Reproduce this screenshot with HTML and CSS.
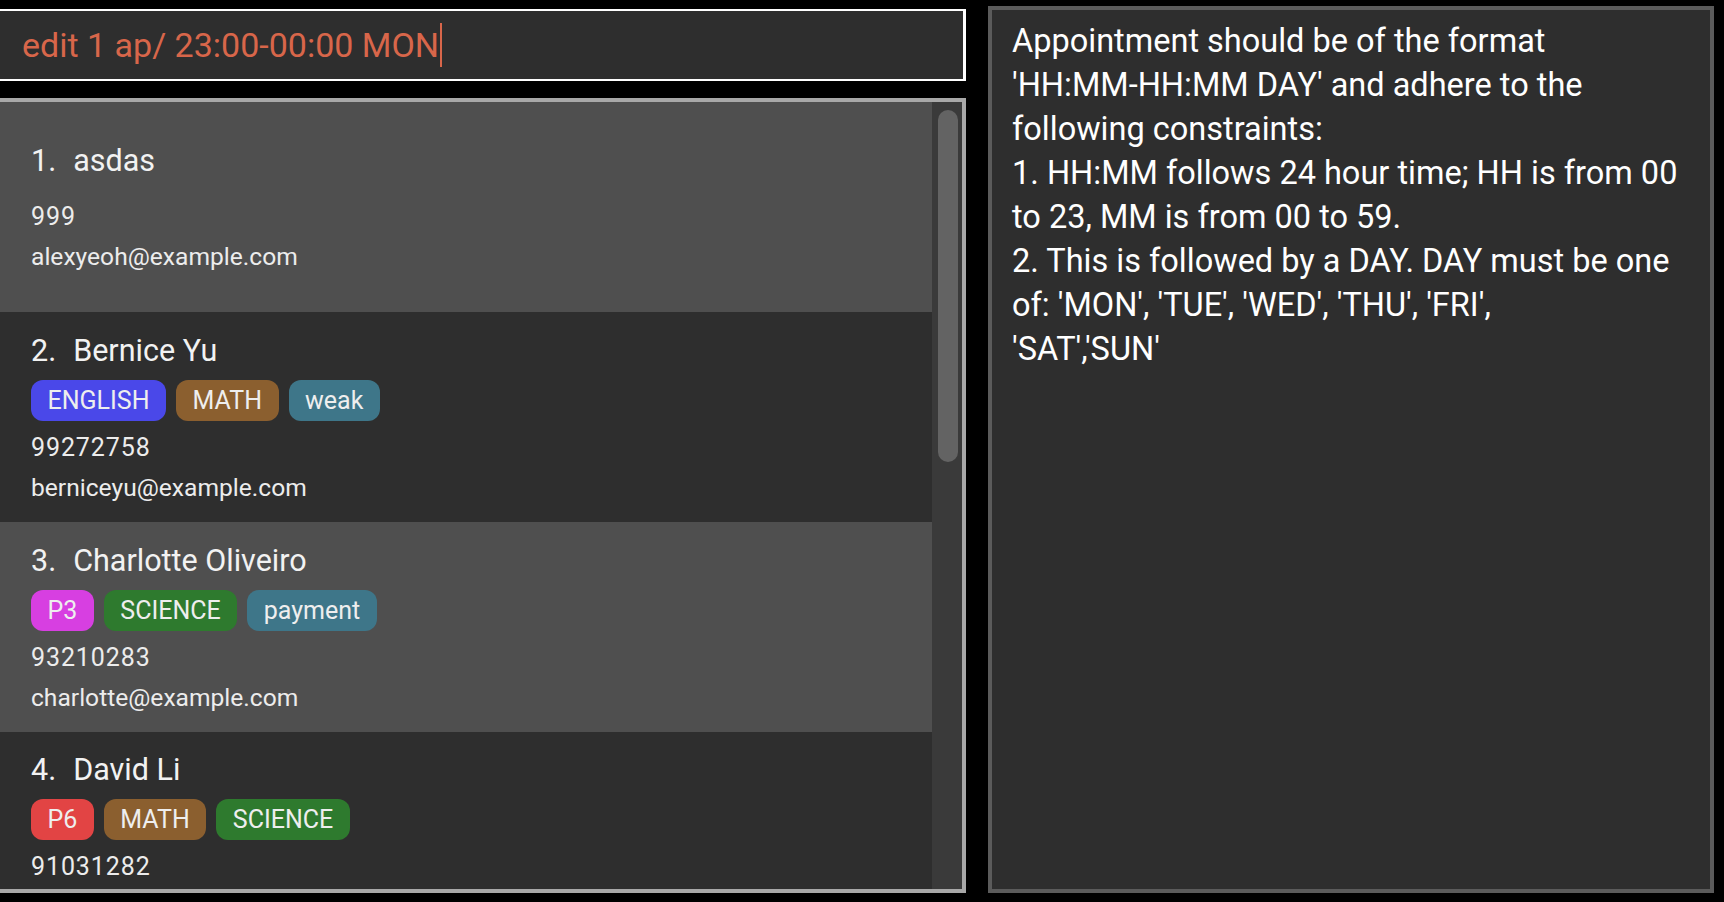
FILE: index.html
```html
<!DOCTYPE html>
<html lang="en">
<head>
<meta charset="utf-8">
<title>Address Book</title>
<link rel="stylesheet" href="styles.css">
</head>
<body>
<div class="app">
  <div class="left">
    <div class="command">
      <span class="command-text">edit 1 ap/ 23:00-00:00 MON</span><span class="caret"></span>
    </div>
    <div class="list">
      <div class="cards">
        <div class="card alt">
          <div class="name"><span class="idx">1.</span>asdas</div>
          <div class="tags"></div>
          <div class="detail phone">999</div>
          <div class="detail email">alexyeoh@example.com</div>
        </div>
        <div class="card">
          <div class="name"><span class="idx">2.</span>Bernice Yu</div>
          <div class="tags">
            <span class="tag blue">ENGLISH</span>
            <span class="tag brown">MATH</span>
            <span class="tag teal">weak</span>
          </div>
          <div class="detail phone">99272758</div>
          <div class="detail email">berniceyu@example.com</div>
        </div>
        <div class="card alt">
          <div class="name"><span class="idx">3.</span>Charlotte Oliveiro</div>
          <div class="tags">
            <span class="tag magenta">P3</span>
            <span class="tag green">SCIENCE</span>
            <span class="tag teal">payment</span>
          </div>
          <div class="detail phone">93210283</div>
          <div class="detail email">charlotte@example.com</div>
        </div>
        <div class="card last">
          <div class="name"><span class="idx">4.</span>David Li</div>
          <div class="tags">
            <span class="tag red">P6</span>
            <span class="tag brown">MATH</span>
            <span class="tag green">SCIENCE</span>
          </div>
          <div class="detail phone">91031282</div>
        </div>
      </div>
      <div class="scrollbar"><div class="thumb"></div></div>
    </div>
  </div>
  <div class="result">
    <p>Appointment should be of the format <span class="nowrap">'HH:MM-HH:MM</span> DAY' and adhere to the following constraints:<br>1. HH:MM follows 24 hour time; HH is from 00 to 23, MM is from 00 to 59.<br>2. This is followed by a DAY. DAY must be one of: 'MON', 'TUE', 'WED', 'THU', 'FRI',<br>'SAT','SUN'</p>
  </div>
</div>
</body>
</html>
```

FILE: styles.css
```css
* { box-sizing: border-box; }

html, body {
  margin: 0;
  height: 100%;
  background: #000;
  overflow: hidden;
}

body {
  font-family: Roboto, "Liberation Sans", Arial, sans-serif;
  color: #fff;
}

.app {
  display: flex;
  gap: 22px;
  height: 902px;
  padding: 6px 10px 9px 0;
}

.left {
  width: 970px;
  margin-left: -4px;
  padding-top: 3px;
  display: flex;
  flex-direction: column;
  gap: 17px;
  flex: none;
}

.command {
  height: 72px;
  border: 2px solid #fff;
  border-right-width: 3px;
  background: #2e2e2e;
  display: flex;
  align-items: center;
  padding-left: 24px;
}

.command-text {
  font-size: 34px;
  color: #d8664a;
  white-space: pre;
}

.caret {
  width: 2px;
  height: 44px;
  background: #d8664a;
  margin-left: 1px;
}

.list {
  flex: 1;
  min-height: 0;
  border: 4px solid #a8a8a8;
  background: #3a3a3a;
  display: flex;
  overflow: hidden;
}

.cards {
  width: 932px;
  flex: none;
  display: flex;
  flex-direction: column;
}

.card {
  min-height: 210px;
  flex: none;
  background: #2e2e2e;
  padding: 2px 0 0 31px;
  display: flex;
  flex-direction: column;
  justify-content: center;
  gap: 11px;
}

.card.alt { background: #4f4f4f; }

.card.last {
  justify-content: flex-start;
  padding-top: 20px;
}

.name {
  font-size: 30.5px;
  line-height: 36px;
  color: #f2f2f2;
}

.idx { margin-right: 17px; }

.tags {
  display: flex;
  gap: 10px;
}

.tag {
  height: 41px;
  padding: 0 16.5px;
  border-radius: 12px;
  font-size: 25px;
  line-height: 41px;
  color: #eeeeee;
}

.blue { background: #4a48e9; }
.brown { background: #8b5f2f; }
.teal { background: #3e7689; }
.magenta { background: #d73fe1; }
.green { background: #2e7a2e; }
.red { background: #e24444; }

.detail {
  font-size: 24.6px;
  line-height: 32px;
  color: #ececec;
}

.detail.phone {
  font-size: 25px;
  letter-spacing: 0.9px;
}

.detail.email { margin-top: -3px; }

.scrollbar {
  flex: 1;
  background: #3a3a3a;
  padding: 8px 4px 0 6px;
}

.thumb {
  height: 352px;
  background: #636363;
  border-radius: 10px;
}

.result {
  width: 726px;
  flex: none;
  border: 4px solid #5b5b5b;
  background: #2e2e2e;
  padding: 9px 16px 0 20px;
}

.result p {
  margin: 0;
  font-size: 32.5px;
  line-height: 44px;
  color: #fff;
}

.nowrap { white-space: nowrap; }
```
